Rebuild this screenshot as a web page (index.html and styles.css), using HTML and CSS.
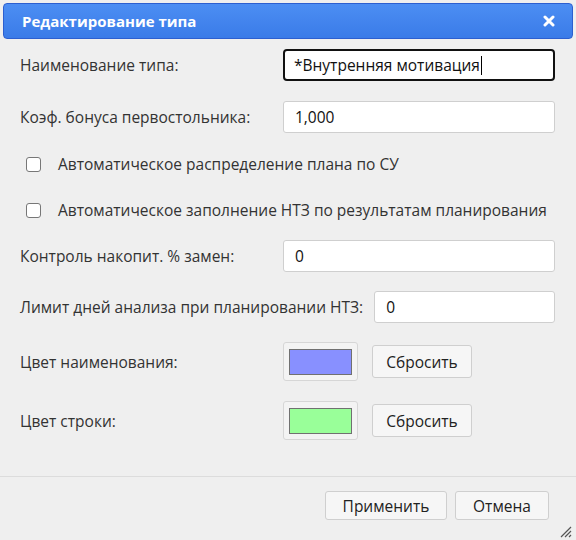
FILE: index.html
```html
<!DOCTYPE html>
<html lang="ru">
<head>
<meta charset="utf-8">
<title>Редактирование типа</title>
<link rel="stylesheet" href="styles.css">
</head>
<body>
<div class="dialog">
  <div class="titlebar">
    <span class="title">Редактирование типа</span>
    <span class="close" aria-label="Закрыть">
      <svg width="12" height="12" viewBox="0 0 12 12"><path d="M2 2 L10 10 M10 2 L2 10" stroke="#fff" stroke-width="3" stroke-linecap="round"/></svg>
    </span>
  </div>
  <div class="content">
    <div class="field">
      <label class="label">Наименование типа:</label>
      <div class="input focused">*Внутренняя мотивация<span class="caret"></span></div>
    </div>
    <div class="field">
      <label class="label">Коэф. бонуса первостольника:</label>
      <div class="input">1,000</div>
    </div>
    <div class="checks">
      <label class="check"><span class="box"></span>Автоматическое распределение плана по СУ</label>
      <label class="check"><span class="box"></span>Автоматическое заполнение НТЗ по результатам планирования</label>
    </div>
    <div class="field short">
      <label class="label">Контроль накопит. % замен:</label>
      <div class="input">0</div>
    </div>
    <div class="field short">
      <label class="label">Лимит дней анализа при планировании НТЗ:</label>
      <div class="input">0</div>
    </div>
    <div class="field color-field">
      <label class="label">Цвет наименования:</label>
      <div class="swatch-wrap"><span class="swatch blue"></span></div>
      <button class="btn reset">Сбросить</button>
    </div>
    <div class="field color-field">
      <label class="label">Цвет строки:</label>
      <div class="swatch-wrap"><span class="swatch green"></span></div>
      <button class="btn reset">Сбросить</button>
    </div>
  </div>
  <div class="buttonpane">
    <button class="btn apply">Применить</button>
    <button class="btn cancel">Отмена</button>
  </div>
  <span class="grip">
    <svg width="14" height="14" viewBox="0 0 14 14"><path d="M13 3 L3 13 M13 7 L7 13 M13 11 L11 13" stroke="#555" stroke-width="1.2"/></svg>
  </span>
</div>
</body>
</html>
```

FILE: styles.css
```css
html, body {
  margin: 0;
  padding: 0;
  background: #efefef;
}

body {
  font-family: "Open Sans", "Noto Sans", sans-serif;
  font-size: 15.5px;
  color: #333;
}

.dialog {
  position: relative;
  width: 576px;
  height: 540px;
  box-sizing: border-box;
  padding: 3px 3px 0;
}

.titlebar {
  height: 36px;
  box-sizing: border-box;
  border: 1px solid #2c5fd0;
  border-radius: 4px;
  background: linear-gradient(#4c8ef3, #3a7be8);
  display: flex;
  align-items: center;
  justify-content: space-between;
  padding: 0 17px 0 18px;
}

.title {
  color: #fff;
  font-weight: bold;
  font-size: 15px;
}

.close {
  display: flex;
}

.content {
  height: 438px;
  box-sizing: border-box;
  border-bottom: 1px solid #dcdcdc;
  margin: 0 -3px;
  padding: 10px 21px 0 20px;
}

.field {
  display: flex;
  align-items: center;
  margin-bottom: 20px;
}

.field.short {
  margin-bottom: 19px;
}

.label {
  flex: 0 0 auto;
  min-width: 252px;
  margin-right: 11px;
}

.input {
  flex: 1;
  height: 32px;
  box-sizing: border-box;
  border: 1px solid #cfcfcf;
  border-radius: 3px;
  background: #fff;
  padding: 0 11px;
  display: flex;
  align-items: center;
  color: #111;
}

.input.focused {
  border: 2px solid #111;
  border-radius: 4px;
  padding-left: 9px;
}

.caret {
  width: 1px;
  height: 19px;
  background: #000;
  margin-left: 1px;
}

.checks {
  margin: -12px 0 7px;
}

.check {
  display: flex;
  align-items: center;
  height: 46px;
  padding-left: 6px;
}

.box {
  width: 13px;
  height: 13px;
  border: 1px solid #777;
  border-radius: 3px;
  background: #fff;
  margin-right: 17px;
}

.color-field {
  margin-bottom: 20px;
}

.swatch-wrap {
  width: 75px;
  height: 39px;
  box-sizing: border-box;
  border: 1px solid #d6d6d6;
  border-radius: 3px;
  background: #f3f3f3;
  display: flex;
  align-items: center;
  justify-content: center;
  margin-right: 14px;
}

.swatch {
  width: 63px;
  height: 26px;
  box-sizing: border-box;
  border: 1px solid #707070;
}

.swatch.blue { background: #8890ff; }
.swatch.green { background: #99ff99; }

.btn {
  font-family: inherit;
  font-size: 15.5px;
  color: #222;
  background: #f6f6f6;
  border: 1px solid #cfcfcf;
  border-radius: 3px;
  padding: 0;
  height: 33px;
}

.reset {
  width: 100px;
}

.buttonpane {
  display: flex;
  justify-content: flex-end;
  gap: 8px;
  padding: 14px 24px 0 0;
}

.buttonpane .btn {
  height: 29px;
}

.apply {
  width: 122px;
}

.cancel {
  width: 94px;
}

.grip {
  position: absolute;
  right: 4px;
  bottom: 2px;
  display: flex;
}
```
